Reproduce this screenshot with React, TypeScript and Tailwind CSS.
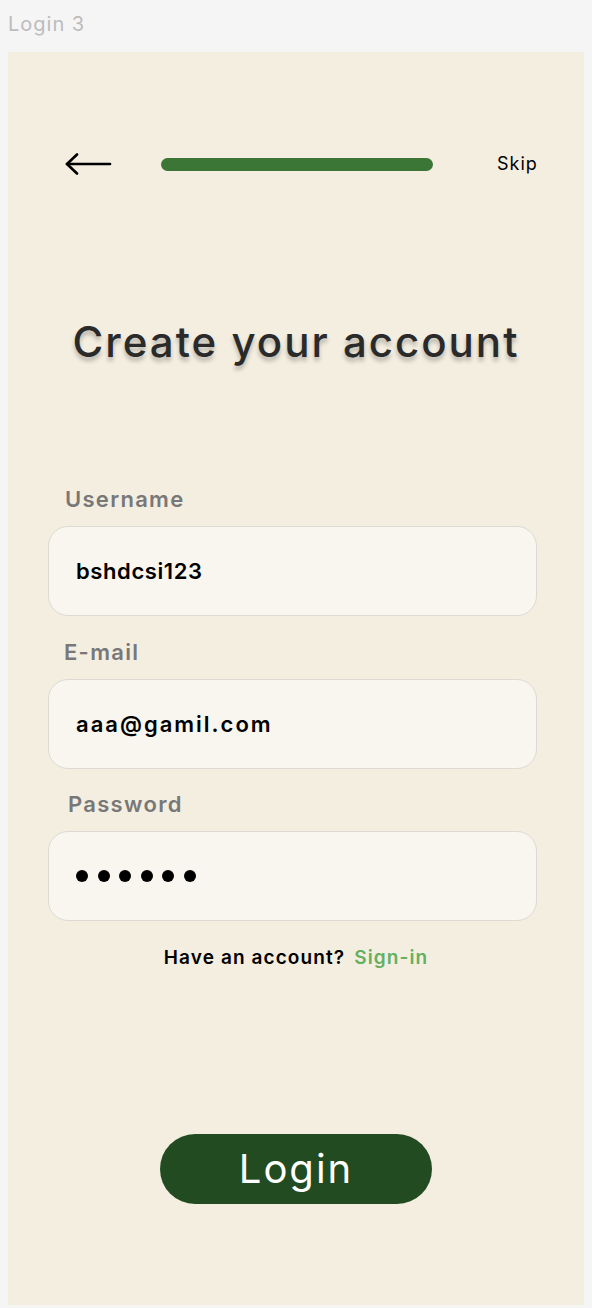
import type { FC } from "react";

const font = { fontFamily: "Inter, 'Open Sans', sans-serif" };

interface FieldProps {
  label: string,
  labelClass: string,
  children: React.ReactNode
}

const Field: FC<FieldProps> = ({ label, labelClass, children }) => (
  <>
    <div className={`h-[24px] leading-[24px] text-[22px] font-semibold tracking-[1.3px] text-[#787878] ${labelClass}`}>
      {label}
    </div>
    <div className="mt-[15px] flex h-[90px] w-[489px] items-center rounded-[20px] border border-[#dcdad3] bg-[#f9f6ef] pl-[27px]">
      {children}
    </div>
  </>
);

const App: FC = () => {
  return (
    <div className="min-h-screen w-full bg-[#f5f5f5]" style={font}>
      <div className="h-[52px] px-2 pt-[12px] text-[20px] leading-[24px] tracking-[1px] text-[#bcbcbc]">Login 3</div>

      <div className="mx-2 flex h-[1253px] flex-col bg-[#f4eee1]">
        <div className="mt-[100px] flex h-[24px] items-center pl-[57px]">
          <svg width="47" height="22" viewBox="0 0 47 22" fill="none" stroke="black" strokeWidth="2.6" strokeLinecap="round" strokeLinejoin="round">
            <path d="M2 11H45" />
            <path d="M12 1.5L2 11L12 20.5" />
          </svg>
          <div className="ml-[49px] h-[13px] w-[272px] rounded-full bg-[#3b7637]"></div>
          <div className="ml-[64px] text-[18px] leading-[24px] tracking-[1px] text-black">Skip</div>
        </div>

        <h1
          className="mt-[136px] h-[60px] text-center text-[42px] font-medium leading-[60px] tracking-[2px] text-[#2a2a2a]"
          style={{ textShadow: "0 4px 4px rgba(0,0,0,0.25)" }}
        >
          Create your account
        </h1>

        <div className="ml-[40px] mt-[115px] flex flex-col">
          <Field label="Username" labelClass="ml-[17px]">
            <span className="text-[22px] font-semibold tracking-[0.6px] text-black">bshdcsi123</span>
          </Field>
          <div className="mt-[24px]"></div>
          <Field label="E-mail" labelClass="ml-[16px]">
            <span className="text-[22px] font-semibold tracking-[2px] text-black">aaa@gamil.com</span>
          </Field>
          <div className="mt-[23px]"></div>
          <Field label="Password" labelClass="ml-[20px]">
            <div className="flex gap-[9.5px]">
              {[0, 1, 2, 3, 4, 5].map((i) => (
                <span key={i} className="h-[12px] w-[12px] rounded-full bg-black"></span>
              ))}
            </div>
          </Field>
        </div>

        <div className="mt-[25px] flex h-[24px] items-center justify-center gap-[9px] text-[19px] font-semibold leading-[24px] tracking-[1.1px]">
          <span className="text-black">Have an account?</span>
          <span className="text-[#63b063]">Sign-in</span>
        </div>

        <button className="mx-auto mt-[164px] flex h-[70px] w-[272px] items-center justify-center rounded-full bg-[#224b22] text-[40px] font-normal tracking-[2px] text-white">
          Login
        </button>
      </div>
    </div>
  );
};

export default App;
